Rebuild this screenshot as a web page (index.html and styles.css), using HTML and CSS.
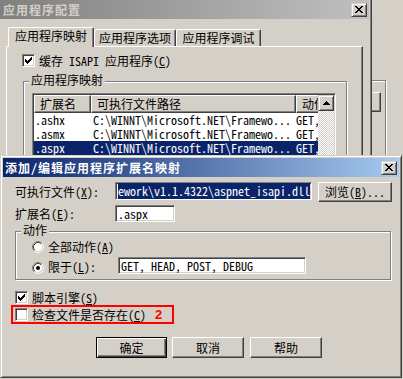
FILE: index.html
```html
<!DOCTYPE html>
<html>
<head>
<meta charset="utf-8">
<link rel="stylesheet" href="styles.css">
</head>
<body>
<div class="win win-right">
  <div class="rw-group"><div class="rw-box"></div></div>
</div>

<div class="win win-back">
  <div class="titlebar inactive">
    <span class="title">应用程序配置</span>
    <span class="closebtn"><svg width="8" height="7" viewBox="0 0 8 7" shape-rendering="crispEdges"><path d="M0 0h2v1H0zM6 0h2v1H6zM1 1h2v1H1zM5 1h2v1H5zM2 2h4v1H2zM3 3h2v1H3zM2 4h4v1H2zM1 5h2v1H1zM5 5h2v1H5zM0 6h2v1H0zM6 6h2v1H6z" fill="#000"/></svg></span>
  </div>
  <div class="tabs">
    <div class="tab sel">应用程序映射</div>
    <div class="tab">应用程序选项</div>
    <div class="tab t3">应用程序调试</div>
  </div>
  <div class="panel">
    <div class="check">
      <span class="cb"><svg width="7" height="7" viewBox="0 0 7 7" shape-rendering="crispEdges"><path d="M6 0h1v1H6zM5 1h2v1H5zM0 2h1v1H0zM4 2h3v1H4zM0 3h2v1H0zM3 3h3v1H3zM0 4h5v1H0zM1 5h3v1H1zM2 6h1v1H2z" fill="#000"/></svg></span>
      <span>缓存 ISAPI 应用程序(<u>C</u>)</span>
    </div>
    <div class="group map-group">
      <div class="legend">应用程序映射</div>
      <div class="list">
        <div class="list-main">
          <div class="lhead">
            <div class="hc c1">扩展名</div>
            <div class="hc c2">可执行文件路径</div>
            <div class="hc c3">动作</div>
          </div>
          <div class="lrow"><div class="c1">.ashx</div><div class="c2">C:\WINNT\Microsoft.NET\Framewo...</div><div class="c3">GET,</div></div>
          <div class="lrow"><div class="c1">.asmx</div><div class="c2">C:\WINNT\Microsoft.NET\Framewo...</div><div class="c3">GET,</div></div>
          <div class="lrow selrow"><div class="c1">.aspx</div><div class="c2">C:\WINNT\Microsoft.NET\Framewo...</div><div class="c3">GET,</div></div>
        </div>
        <div class="vscroll">
          <div class="sbtn"><svg width="7" height="4" viewBox="0 0 7 4" shape-rendering="crispEdges"><path d="M3 0h1v1H3zM2 1h3v1H2zM1 2h5v1H1zM0 3h7v1H0z" fill="#000"/></svg></div>
          <div class="track"></div>
        </div>
      </div>
    </div>
  </div>
</div>

<div class="win win-front">
  <div class="titlebar active">
    <span class="title">添加/编辑应用程序扩展名映射</span>
    <span class="closebtn"><svg width="8" height="7" viewBox="0 0 8 7" shape-rendering="crispEdges"><path d="M0 0h2v1H0zM6 0h2v1H6zM1 1h2v1H1zM5 1h2v1H5zM2 2h4v1H2zM3 3h2v1H3zM2 4h4v1H2zM1 5h2v1H1zM5 5h2v1H5zM0 6h2v1H0zM6 6h2v1H6z" fill="#000"/></svg></span>
  </div>
  <div class="dlg">
    <div class="frow r1">
      <span class="flabel">可执行文件(<u>X</u>):</span>
      <div class="tb tb-exe"><span class="hl">ework\v1.1.4322\aspnet_isapi.dll</span></div>
      <div class="btn browse">浏览(<u>B</u>)...</div>
    </div>
    <div class="frow r2">
      <span class="flabel">扩展名(<u>E</u>):</span>
      <div class="tb tb-ext">.aspx</div>
    </div>
    <div class="group act">
      <div class="legend">动作</div>
      <div class="rrow">
        <svg class="rb" width="12" height="12" viewBox="0 0 12 12"><circle cx="6" cy="6" r="4.5" fill="#fff"/><path d="M2.11 9.89A5.5 5.5 0 0 1 9.89 2.11" fill="none" stroke="#808080"/><path d="M9.89 2.11A5.5 5.5 0 0 1 2.11 9.89" fill="none" stroke="#fff"/><path d="M2.82 9.18A4.5 4.5 0 0 1 9.18 2.82" fill="none" stroke="#404040"/><path d="M9.18 2.82A4.5 4.5 0 0 1 2.82 9.18" fill="none" stroke="#d4d0c8"/></svg>
        <span>全部动作(<u>A</u>)</span>
      </div>
      <div class="rrow rr2">
        <svg class="rb" width="12" height="12" viewBox="0 0 12 12"><circle cx="6" cy="6" r="4.5" fill="#fff"/><path d="M2.11 9.89A5.5 5.5 0 0 1 9.89 2.11" fill="none" stroke="#808080"/><path d="M9.89 2.11A5.5 5.5 0 0 1 2.11 9.89" fill="none" stroke="#fff"/><path d="M2.82 9.18A4.5 4.5 0 0 1 9.18 2.82" fill="none" stroke="#404040"/><path d="M9.18 2.82A4.5 4.5 0 0 1 2.82 9.18" fill="none" stroke="#d4d0c8"/><circle cx="6" cy="6" r="2" fill="#000"/></svg>
        <span class="rlabel">限于(<u>L</u>):</span>
        <div class="tb tb-verbs">GET, HEAD, POST, DEBUG</div>
      </div>
    </div>
    <div class="check c-script">
      <span class="cb"><svg width="7" height="7" viewBox="0 0 7 7" shape-rendering="crispEdges"><path d="M6 0h1v1H6zM5 1h2v1H5zM0 2h1v1H0zM4 2h3v1H4zM0 3h2v1H0zM3 3h3v1H3zM0 4h5v1H0zM1 5h3v1H1zM2 6h1v1H2z" fill="#000"/></svg></span>
      <span>脚本引擎(<u>S</u>)</span>
    </div>
    <div class="annot">
      <div class="check">
        <span class="cb"></span>
        <span>检查文件是否存在(<u>C</u>)</span>
      </div>
      <span class="num">2</span>
    </div>
    <div class="btnrow">
      <div class="btn b-ok">确定</div>
      <div class="btn b-cancel">取消</div>
      <div class="btn b-help">帮助</div>
    </div>
  </div>
</div>
</body>
</html>
```

FILE: styles.css
```css
* { box-sizing: border-box; margin: 0; padding: 0; }
html, body { width: 403px; height: 379px; overflow: hidden; }
body {
  position: relative;
  background: #d4d0c8;
  color: #000;
  font-family: "Noto Sans Mono CJK SC", "Noto Sans CJK SC", monospace;
  font-size: 12px;
  line-height: 14px;
}
u { text-decoration: underline; text-underline-offset: 1px; }
svg { display: block; flex: none; }

/* windows */
.win {
  position: absolute;
  display: flex;
  flex-direction: column;
  background: #d4d0c8;
  border: 1px solid;
  border-color: #d4d0c8 #404040 #404040 #d4d0c8;
  box-shadow: inset 1px 1px 0 #fff, inset -1px -1px 0 #808080;
  padding: 2px;
  overflow: hidden;
}
.win-right { left: 372px; top: 0; width: 31px; height: 160px; border: 0; box-shadow: none; padding: 0; }
.win-back { left: -3px; top: -3px; width: 375px; height: 240px; }
.win-front { left: 0; top: 155px; width: 402px; height: 223px; }

.titlebar {
  flex: none;
  height: 19px;
  display: flex;
  align-items: center;
  justify-content: space-between;
  padding: 0 2px 0 3px;
  font-weight: 700;
  letter-spacing: 1px;
  white-space: nowrap;
}
.titlebar.inactive { background: linear-gradient(to right, #808080, #c0c0c0); color: #d4d0c8; }
.titlebar.active { background: linear-gradient(to right, #0a246a, #a6caf0); color: #fff; padding-left: 2px; }
.closebtn {
  flex: none;
  width: 16px;
  height: 14px;
  display: flex;
  align-items: center;
  justify-content: center;
  background: #d4d0c8;
  border: 1px solid;
  border-color: #d4d0c8 #404040 #404040 #d4d0c8;
  box-shadow: inset 1px 1px 0 #fff, inset -1px -1px 0 #808080;
}

/* right background window */
.rw-group {
  flex: none;
  margin: 80px 0 0 -30px;
  width: 44px;
  height: 100px;
  padding: 11px 0 0 8px;
  border: 1px solid #808080;
  box-shadow: 1px 1px 0 #fff, inset 1px 1px 0 #fff;
}
.rw-box {
  width: 30px;
  height: 20px;
  border: 1px solid;
  border-color: #fff #404040 #404040 #fff;
  box-shadow: inset -1px -1px 0 #808080;
}

/* tabs */
.tabs {
  flex: none;
  display: flex;
  align-items: flex-end;
  height: 19px;
  margin: 8px 0 0 8px;
  position: relative;
  z-index: 1;
}
.tab {
  flex: none;
  width: 82px;
  height: 17px;
  padding-top: 1px;
  text-align: center;
  white-space: nowrap;
  background: #d4d0c8;
  border: 1px solid #fff;
  border-bottom: 0;
  border-right-color: #404040;
  border-radius: 2px 2px 0 0;
  box-shadow: inset -1px 0 0 #808080;
}
.tab.sel { width: 86px; height: 20px; margin-bottom: -1px; }
.tab.t3 { width: 85px; }

.panel {
  flex: none;
  margin-left: 6px;
  width: 357px;
  height: 180px;
  border: 1px solid;
  border-color: #fff #404040 #404040 #fff;
  box-shadow: inset -1px -1px 0 #808080;
  padding: 7px 0 0 15px;
}

/* checkbox */
.check { display: flex; align-items: center; gap: 4px; height: 13px; white-space: nowrap; }
.cb {
  flex: none;
  width: 13px;
  height: 13px;
  display: flex;
  align-items: center;
  justify-content: center;
  background: #fff;
  border: 1px solid;
  border-color: #808080 #fff #fff #808080;
  box-shadow: inset 1px 1px 0 #404040, inset -1px -1px 0 #d4d0c8;
}

/* group box */
.group {
  position: relative;
  flex: none;
  border: 1px solid #808080;
  box-shadow: 1px 1px 0 #fff, inset 1px 1px 0 #fff;
}
.legend {
  position: absolute;
  top: -9px;
  left: 5px;
  padding: 0 2px;
  background: #d4d0c8;
  white-space: nowrap;
}
.map-group { margin: 14px 0 0 1px; width: 324px; height: 140px; }

/* list view */
.list {
  margin: 11px 0 0 8px;
  width: 304px;
  height: 100px;
  display: flex;
  background: #fff;
  border: 1px solid;
  border-color: #808080 #fff #fff #808080;
  box-shadow: inset 1px 1px 0 #404040, inset -1px -1px 0 #d4d0c8;
  padding: 1px;
}
.list-main { width: 284px; overflow: hidden; flex: none; }
.lhead { display: flex; height: 18px; }
.hc {
  flex: none;
  height: 18px;
  padding: 1px 0 0 5px;
  white-space: nowrap;
  overflow: hidden;
  background: #d4d0c8;
  border: 1px solid;
  border-color: #fff #404040 #404040 #fff;
  box-shadow: inset -1px -1px 0 #808080;
}
.c1 { flex: none; width: 57px; }
.c2 { flex: none; width: 205px; }
.c3 { flex: none; width: 60px; }
.lrow { display: flex; height: 14px; white-space: nowrap; }
.lrow .c1 { padding-left: 1px; }
.lrow .c2 { padding-left: 2px; }
.lrow .c3 { padding-left: 0; }
.lrow.selrow { background: #0a246a; color: #fff; }
.vscroll { flex: none; width: 16px; display: flex; flex-direction: column; }
.sbtn {
  flex: none;
  height: 16px;
  display: flex;
  align-items: center;
  justify-content: center;
  background: #d4d0c8;
  border: 1px solid;
  border-color: #d4d0c8 #404040 #404040 #d4d0c8;
  box-shadow: inset 1px 1px 0 #fff, inset -1px -1px 0 #808080;
}
.track { flex: 1; background: repeating-conic-gradient(#fff 0 25%, #d4d0c8 0 50%) 0 0 / 2px 2px; }

/* front dialog */
.dlg { display: flex; flex-direction: column; align-items: flex-start; padding: 5px 0 0 12px; }
.frow { display: flex; align-items: center; flex: none; }
.r1 { height: 20px; }
.r2 { margin-top: 3px; height: 17px; }
.flabel { flex: none; width: 100px; white-space: nowrap; }
.tb {
  flex: none;
  background: #fff;
  border: 1px solid;
  border-color: #808080 #fff #fff #808080;
  box-shadow: inset 1px 1px 0 #404040, inset -1px -1px 0 #d4d0c8;
  padding: 1px 1px 0 2px;
  white-space: nowrap;
  overflow: hidden;
}
.tb-exe { width: 197px; height: 18px; align-self: flex-start; }
.hl { background: #0a246a; color: #fff; }
.tb-ext { width: 60px; height: 17px; }
.tb-verbs { width: 188px; height: 17px; }

.btn {
  flex: none;
  height: 21px;
  display: flex;
  align-items: center;
  justify-content: center;
  white-space: nowrap;
  background: #d4d0c8;
  border: 1px solid;
  border-color: #fff #404040 #404040 #fff;
  box-shadow: inset -1px -1px 0 #808080;
}
.browse { width: 74px; height: 20px; margin-left: 6px; }

.act { margin-top: 9px; width: 376px; height: 49px; padding: 9px 0 0 16px; }
.rrow { display: flex; align-items: center; gap: 4px; height: 12px; white-space: nowrap; }
.rrow.rr2 { margin-top: 4px; height: 17px; align-items: flex-end; }
.rlabel { flex: none; width: 66px; }

.c-script { margin-top: 11px; }
.annot {
  flex: none;
  display: flex;
  align-items: center;
  margin: 1px 0 0 -4px;
  width: 163px;
  border: 2px solid #f00;
  padding: 1px 2px;
}
.num { margin-left: 9px; color: #f00; font: 700 13px/13px "Liberation Sans", sans-serif; }

.btnrow { display: flex; margin: 13px 0 0 81px; }
.b-ok {
  width: 71px;
  border-color: #000;
  box-shadow: inset 1px 1px 0 #fff, inset -1px -1px 0 #404040, inset -2px -2px 0 #808080;
}
.b-cancel { width: 72px; margin-left: 5px; }
.b-help { width: 72px; margin-left: 6px; }
```
